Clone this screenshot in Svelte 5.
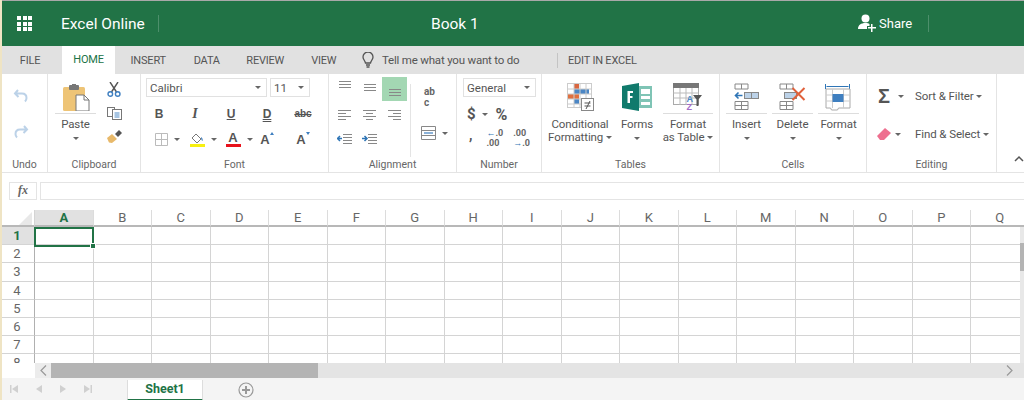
<script>
	const tabs = ['INSERT', 'DATA', 'REVIEW', 'VIEW'];
	const columns = 'ABCDEFGHIJKLMNOPQ'.split('');
	const rows = [1, 2, 3, 4, 5, 6, 7, 8];
</script>

<div class="app">
	<header class="titlebar">
		<div class="waffle">
			{#each Array(9) as _}<i></i>{/each}
		</div>
		<span class="product">Excel Online</span>
		<span class="bar-sep"></span>
		<span class="doc">Book 1</span>
		<svg class="share-icon" width="18" height="18" viewBox="0 0 18 18">
			<circle cx="7.5" cy="4.5" r="4" fill="#fff" />
			<path d="M0 15c0-4 3-6 7.5-6 2 0 3 .4 4 1v2H9v3z" fill="#fff" />
			<path d="M13 10v3h-3v1.5h3V18h1.5v-3.500H18V13h-3.500v-3z" fill="#fff" />
		</svg>
		<span class="share">Share</span>
		<span class="bar-sep share-sep"></span>
	</header>

	<nav class="tabs">
		<span class="tab file">FILE</span>
		<span class="tab home">HOME</span>
		{#each tabs as tab}
			<span class="tab">{tab}</span>
		{/each}
		<svg class="bulb" width="12" height="16" viewBox="0 0 12 16" fill="none" stroke="#555" stroke-width="1.3">
			<path d="M3.500 11C3 8.500 1 7.500 1 5a5 5 0 0 1 10 0c0 2.500-2 3.500-2.500 6z" />
			<path d="M4 13h4M4.500 15h3" />
		</svg>
		<span class="tell">Tell me what you want to do</span>
		<span class="tab-sep"></span>
		<span class="tab edit">EDIT IN EXCEL</span>
	</nav>

	<section class="ribbon">
		<div class="group undo">
			<div class="body undo-body">
				<svg width="16" height="14" viewBox="0 0 16 14" fill="none" stroke="#bcd2e8" stroke-width="2">
					<path d="M5 1 2 4.500 5.500 8M2 4.500h7c3 0 4.500 2 4.500 4.500 0 1.500-.5 2.500-1.500 3.500" />
				</svg>
				<svg width="16" height="14" viewBox="0 0 16 14" fill="none" stroke="#bcd2e8" stroke-width="2">
					<path d="M11 1l3 3.500L10.500 8M14 4.500H7C4 4.500 2.500 6.500 2.500 9c0 1.500.5 2.500 1.500 3.500" />
				</svg>
			</div>
			<div class="label">Undo</div>
		</div>

		<div class="group clipboard">
			<div class="body clip-body">
				<div class="big paste">
					<svg width="28" height="28" viewBox="-1.500 -1 28 28">
						<rect x="0" y="3" width="22" height="24" rx="1.500" fill="#eec476" />
						<rect x="6" y="1" width="10" height="5" rx="1" fill="#777" />
						<rect x="9" y="0" width="4" height="3" fill="#777" />
						<path d="M13 11h8l5 5v11H13z" fill="#fff" stroke="#777" />
						<path d="M21 11v5h5" fill="none" stroke="#777" />
					</svg>
					<span class="big-text">Paste</span>
					<i class="caret"></i>
				</div>
				<div class="small-col">
					<svg width="14" height="15" viewBox="0 0 14 15" fill="none">
						<path d="M3 0l6.500 10M11 0 4.500 10" stroke="#555" stroke-width="1.400" />
						<circle cx="3.300" cy="12" r="2.300" stroke="#3f7fc0" stroke-width="1.400" />
						<circle cx="10.700" cy="12" r="2.300" stroke="#3f7fc0" stroke-width="1.400" />
					</svg>
					<svg width="15" height="13" viewBox="0 0 15 13">
						<rect x=".5" y=".5" width="7" height="9" fill="#fff" stroke="#777" />
						<rect x="5.500" y="2.500" width="9" height="10" fill="#fff" stroke="#777" />
						<path d="M7.500 6h5M7.500 8h5M7.500 10h5" stroke="#4f8ac6" />
					</svg>
					<svg width="15" height="14" viewBox="0 0 15 14">
						<path d="M0 8l5-4 5 5-5 4-3-.5z" fill="#e8b96a" />
						<path d="M8 4l4-4 3 3-4 4z" fill="#555" />
					</svg>
				</div>
			</div>
			<div class="label">Clipboard</div>
		</div>

		<div class="group font">
			<div class="body font-body">
				<div class="selects">
					<div class="select font-name"><span>Calibri</span><i class="caret"></i></div>
					<div class="select font-size"><span>11</span><i class="caret"></i></div>
				</div>
				<div class="font-styles">
					<span class="fbtn bold">B</span>
					<span class="fbtn italic">I</span>
					<span class="fbtn under">U</span>
					<span class="fbtn dbl">D</span>
					<span class="fbtn strike">abc</span>
				</div>
				<div class="font-tools">
					<span class="tool">
						<svg width="13" height="13" viewBox="0 0 13 13" fill="none" stroke="#bbb">
							<path d="M.5.500h12v12H.5zM6.500.500v12M.5 6.500h12" />
						</svg>
						<i class="caret"></i>
					</span>
					<span class="tool">
						<svg width="15" height="15" viewBox="0 0 15 15">
							<path d="M2 6l4-4 5 5-4 4z" fill="#fff" stroke="#777" />
							<path d="M11 5c1.500 1 2 2.500 1.500 4-1-.5-1.500-2-1.500-4z" fill="#3f7fc0" />
							<rect x="0" y="12" width="15" height="3" fill="#f7f011" />
						</svg>
						<i class="caret"></i>
					</span>
					<span class="tool">
						<span class="color-a">A</span>
						<i class="caret"></i>
					</span>
					<span class="grow-a">A<i class="tri up"></i></span>
					<span class="shrink-a">A<i class="tri down"></i></span>
				</div>
			</div>
			<div class="label">Font</div>
		</div>

		<div class="group alignment">
			<div class="body align-body">
				<div class="align-grid">
					<div class="aligns">
						<span class="abtn"><svg width="15" height="16" viewBox="0 0 15 16" stroke="#888"><path d="M2 1.500h12M2 4.500h12M2 7.500h12" /></svg></span>
						<span class="abtn"><svg width="15" height="16" viewBox="0 0 15 16" stroke="#888"><path d="M2 4.500h12M2 7.500h12M2 10.500h12" /></svg></span>
						<span class="abtn on"><svg width="15" height="16" viewBox="0 0 15 16" stroke="#888"><path d="M2 8.500h12M2 11.500h12M2 14.500h12" /></svg></span>
					</div>
					<div class="aligns mid">
						<span class="abtn"><svg width="15" height="11" viewBox="0 0 15 11" stroke="#888"><path d="M1 1.500h13M1 4.500h8M1 7.500h13M1 10.500h8" /></svg></span>
						<span class="abtn"><svg width="15" height="11" viewBox="0 0 15 11" stroke="#888"><path d="M1 1.500h13M4 4.500h7M1 7.500h13M4 10.500h7" /></svg></span>
						<span class="abtn"><svg width="15" height="11" viewBox="0 0 15 11" stroke="#888"><path d="M1 1.500h13M6 4.500h8M1 7.500h13M6 10.500h8" /></svg></span>
					</div>
					<div class="aligns low">
						<span class="abtn">
							<svg width="15" height="11" viewBox="0 0 15 11" fill="none">
								<path d="M6 1.500h9M6 4.500h9M6 7.500h9M6 10.500h9" stroke="#888" />
								<path d="M0 5.500h5M3 3 .5 5.500 3 8" stroke="#2e75b6" stroke-width="1.500" />
							</svg>
						</span>
						<span class="abtn">
							<svg width="15" height="11" viewBox="0 0 15 11" fill="none">
								<path d="M6 1.500h9M6 4.500h9M6 7.500h9M6 10.500h9" stroke="#888" />
								<path d="M0 5.500h5M2.500 3 5 5.500 2.500 8" stroke="#2e75b6" stroke-width="1.500" />
							</svg>
						</span>
					</div>
				</div>
				<div class="align-extra">
					<span class="wrap">ab<br />c</span>
					<span class="merge">
						<svg width="15" height="14" viewBox="0 0 15 14" fill="none">
							<path d="M.5.500h14v13H.5zM.5 4.500h14M.5 9.500h14" stroke="#888" />
							<path d="M3 7h9" stroke="#3f7fc0" stroke-width="1.200" />
						</svg>
						<i class="caret"></i>
					</span>
				</div>
			</div>
			<div class="label">Alignment</div>
		</div>

		<div class="group number">
			<div class="body number-body">
				<div class="select general"><span>General</span><i class="caret"></i></div>
				<div class="num-row dollar">
					<span class="sym">$</span><i class="caret"></i><span class="sym pct">%</span>
				</div>
				<div class="num-row low">
					<span class="comma">,</span>
					<span class="dec"><b class="arrow">←</b>.0<br />.00</span>
					<span class="dec right">.00<br /><b class="arrow">→</b>.0</span>
				</div>
			</div>
			<div class="label">Number</div>
		</div>

		<div class="group tables">
			<div class="body big-row tables-body">
				<div class="big cond">
					<svg width="28" height="28" viewBox="-1 0 28 28">
						<rect x=".5" y=".5" width="24" height="24" fill="#fff" stroke="#ccc" />
						<rect x="7" y="1" width="5" height="5" fill="#d9663f" />
						<rect x="7" y="6" width="15" height="5" fill="#4a86c5" />
						<rect x="1" y="11" width="11" height="5" fill="#e0703f" />
						<rect x="7" y="16" width="5" height="5" fill="#4a86c5" />
						<path d="M.5 6h24M.5 11h24M.5 16h24M.5 21h24M7 1v24M13 1v24M19 1v24" stroke="#ccc" fill="none" />
						<rect x="14.500" y="15.500" width="12" height="12" fill="#fff" stroke="#888" />
						<path d="M17.500 20h6M17.500 23h6M23 18l-4 8" stroke="#555" fill="none" />
					</svg>
					<span class="big-text">Conditional</span>
					<span class="big-text">Formatting <i class="caret"></i></span>
				</div>
				<div class="big forms">
					<svg width="30" height="28" viewBox="0 0 30 28">
						<rect x="12" y="3" width="18" height="22" fill="#7fc4b5" />
						<rect x="19" y="6" width="9" height="5" fill="#fff" />
						<rect x="19" y="13" width="9" height="3" fill="#fff" />
						<rect x="19" y="19" width="9" height="3" fill="#fff" />
						<path d="M0 3l17-3v28L0 25z" fill="#107a6c" />
						<path d="M5.500 8H11v2H8v3h2.500v2H8v5H5.500z" fill="#fff" />
					</svg>
					<span class="big-text">Forms</span>
					<i class="caret"></i>
				</div>
				<div class="big astable">
					<svg width="30" height="28" viewBox="0 0 30 28">
						<rect x=".5" y=".5" width="25" height="21" fill="#fff" stroke="#aaa" />
						<rect x="0" y="0" width="26" height="5" fill="#777" />
						<path d="M.5 10h25M.5 15h25M7 5v17M13 5v17M19 5v17" stroke="#bbb" fill="none" />
						<text x="13.500" y="19" class="az">A</text>
						<text x="13.500" y="27" class="az zed">Z</text>
						<path d="M20 12h9l-3.500 4.500V23h-2v-6.500z" fill="#555" />
					</svg>
					<span class="big-text">Format</span>
					<span class="big-text">as Table <i class="caret"></i></span>
				</div>
			</div>
			<div class="label">Tables</div>
		</div>

		<div class="group cells">
			<div class="body big-row cells-body">
				<div class="big cell-btn">
					<svg width="26" height="28" viewBox="0 0 26 28" fill="none">
						<path d="M1.500 1h13v5h-13zM8 1v5M1.500 18.500h13v8h-13zM8 18.500v8M1.500 22.500h13" stroke="#888" />
						<rect x="11" y="9.500" width="14" height="6" fill="#bcd2e8" stroke="#888" />
						<path d="M18 9.500v6" stroke="#888" />
						<path d="M2 12.500h7M5 9.500l-3 3 3 3" stroke="#2e75b6" stroke-width="1.600" />
					</svg>
					<span class="big-text">Insert</span>
					<i class="caret"></i>
				</div>
				<div class="big cell-btn">
					<svg width="28" height="28" viewBox="0 0 28 28" fill="none">
						<path d="M1.500 1h13v5h-13zM8 1v5M1.500 18.500h13v8h-13zM8 18.500v8M1.500 22.500h13" stroke="#888" />
						<rect x="6" y="9.500" width="12" height="6" fill="#bcd2e8" stroke="#888" />
						<path d="M14 5l12 12M26 5 14 17" stroke="#e0603a" stroke-width="2" />
					</svg>
					<span class="big-text">Delete</span>
					<i class="caret"></i>
				</div>
				<div class="big cell-btn">
					<svg width="28" height="28" viewBox="0 0 28 28" fill="none">
						<path d="M1 1v5M25 1v5M2 3.500h22" stroke="#2e75b6" />
						<path d="M1.500 6h24v19H14l-1 2H7l-1-2H1.500z" stroke="#aaa" fill="#fff" />
						<path d="M1.500 12h24M1.500 18h24M8 6v19M19 6v19" stroke="#ccc" />
						<rect x="8" y="11" width="11" height="8" fill="#3f7fc0" />
					</svg>
					<span class="big-text">Format</span>
					<i class="caret"></i>
				</div>
			</div>
			<div class="label">Cells</div>
		</div>

		<div class="group editing">
			<div class="body edit-body">
				<div class="edit-row">
					<span class="sigma">Σ</span><i class="caret"></i>
					<span class="edit-text sort">Sort &amp; Filter <i class="caret"></i></span>
				</div>
				<div class="edit-row">
					<svg class="eraser" width="14" height="12" viewBox="0 0 14 12">
						<path d="M0 8l8-8 6 5-7 7H3z" fill="#ee6f8f" />
					</svg>
					<i class="caret"></i>
					<span class="edit-text">Find &amp; Select <i class="caret"></i></span>
				</div>
			</div>
			<div class="label">Editing</div>
		</div>

		<svg class="collapse" width="10" height="7" viewBox="0 0 10 7" fill="none" stroke="#555" stroke-width="1.500">
			<path d="M1 6l4-4 4 4" />
		</svg>
	</section>

	<div class="formula">
		<span class="fx">fx</span>
		<div class="formula-input"></div>
	</div>

	<div class="sheet">
		<div class="grid">
			<div class="corner"><i></i></div>
			{#each columns as col, i}
				<div class="col-head" class:active={i === 0}>{col}</div>
			{/each}
			{#each rows as row}
				<div class="row-head" class:active={row === 1}>{row}</div>
				{#each columns as col}
					<div class="cell"></div>
				{/each}
			{/each}
		</div>
		<div class="selection"><i></i></div>
		<div class="vscroll"><i></i></div>
	</div>

	<div class="hscroll">
		<div class="hscroll-gap"></div>
		<span class="chev">
			<svg width="7" height="11" viewBox="0 0 7 11" fill="none" stroke="#999" stroke-width="1.200"><path d="M6 .5 1 5.500l5 5" /></svg>
		</span>
		<div class="thumb"></div>
		<span class="chev end">
			<svg width="7" height="11" viewBox="0 0 7 11" fill="none" stroke="#999" stroke-width="1.200"><path d="M1 .5l5 5-5 5" /></svg>
		</span>
	</div>

	<footer class="sheetbar">
		<div class="sheet-nav">
			<svg width="8" height="8" viewBox="0 0 8 8" fill="#d0d0d0"><path d="M0 0h1.500v8H0zM8 0v8L2 4z" /></svg>
			<svg width="8" height="8" viewBox="0 0 8 8" fill="#d0d0d0"><path d="M7 0v8L1 4z" /></svg>
			<svg width="8" height="8" viewBox="0 0 8 8" fill="#d0d0d0"><path d="M1 0v8l6-4z" /></svg>
			<svg width="8" height="8" viewBox="0 0 8 8" fill="#d0d0d0"><path d="M8 0H6.500v8H8zM0 0v8l6-4z" /></svg>
		</div>
		<div class="sheet-tab">Sheet1</div>
		<svg class="add" width="16" height="16" viewBox="0 0 16 16" fill="none" stroke="#999">
			<circle cx="8" cy="8" r="7" stroke-width="1.200" />
			<path d="M8 4v8M4 8h8" stroke-width="2" />
		</svg>
	</footer>
</div>

<style>
	:global(body) {
		margin: 0;
		background: #fff;
	}
	.app {
		width: 1024px;
		height: 400px;
		box-sizing: border-box;
		border-left: 2px solid #efe4c4;
		overflow: hidden;
		display: flex;
		flex-direction: column;
		font-family: Roboto, 'Open Sans', sans-serif;
		color: #555;
	}

	.caret {
		display: inline-block;
		width: 0;
		height: 0;
		border-left: 3px solid transparent;
		border-right: 3px solid transparent;
		border-top: 3px solid #666;
		vertical-align: middle;
		flex: none;
	}

	/* Title bar */
	.titlebar {
		height: 45px;
		margin-top: 1px;
		box-shadow: 0 -1px 0 #a9a9a9;
		flex: none;
		background: #217346;
		color: #fff;
		display: flex;
		align-items: center;
	}
	.waffle {
		margin-left: 15px;
		width: 15px;
		display: grid;
		grid-template-columns: repeat(3, 4px);
		gap: 1.500px;
	}
	.waffle i {
		height: 4px;
		background: #fff;
	}
	.product {
		margin-left: 29px;
		font-size: 15.500px;
		width: 97px;
		white-space: nowrap;
	}
	.bar-sep {
		width: 1px;
		height: 17px;
		background: #4d8f6b;
	}
	.doc {
		margin-left: 272px;
		font-size: 15.500px;
		width: 427px;
	}
	.share-icon {
		flex: none;
		margin-top: -2px;
	}
	.share {
		margin-left: 3px;
		font-size: 13px;
		width: 49px;
	}

	/* Tabs */
	.tabs {
		height: 28px;
		flex: none;
		background: #e1e1e1;
		display: flex;
		align-items: center;
		font-size: 11px;
		letter-spacing: -0.2px;
		white-space: nowrap;
	}
	.tab {
		flex: none;
		width: 58.500px;
		text-align: center;
	}
	.tab.file {
		width: 60px;
		margin-right: 0;
		box-sizing: border-box;
		padding-right: 4px;
	}
	.tab.home {
		width: 53px;
		height: 28px;
		line-height: 28px;
		background: #fff;
		color: #217346;
		margin-right: 4px;
	}
	.bulb {
		margin-left: 9px;
		flex: none;
	}
	.tell {
		margin-left: 8px;
		width: 175px;
		font-size: 11.500px;
	}
	.tab-sep {
		width: 1px;
		height: 15px;
		background: #c4c4c4;
	}
	.tab.edit {
		width: auto;
		margin-left: 10px;
	}

	/* Ribbon */
	.ribbon {
		height: 99px;
		flex: none;
		box-sizing: border-box;
		border-bottom: 1px solid #e4e4e4;
		display: flex;
		position: relative;
		font-size: 11px;
	}
	.group {
		flex: none;
		display: flex;
		flex-direction: column;
		height: 98px;
		box-sizing: border-box;
		padding-top: 1px;
		border-right: 1px solid #e4e4e4;
	}
	.body {
		flex: 1;
		min-height: 0;
	}
	.label {
		text-align: center;
		font-size: 10.500px;
		line-height: 18px;
		height: 16px;
		color: #666;
		white-space: nowrap;
	}
	.undo {
		width: 46px;
	}
	.undo-body {
		display: flex;
		flex-direction: column;
		align-items: flex-start;
		padding: 14px 0 0 11px;
		gap: 22px;
	}
	.clipboard {
		width: 93px;
	}
	.clip-body {
		display: flex;
		padding: 8px 0 0 7px;
	}
	.big {
		display: flex;
		flex-direction: column;
		align-items: center;
		width: 41px;
		flex: none;
		white-space: nowrap;
	}
	.big > svg {
		height: 28px;
		padding-bottom: 2px;
		border-bottom: 1px solid transparent;
		flex: none;
	}
	.big .big-text {
		line-height: 13px;
		font-size: 11.500px;
		letter-spacing: -0.1px;
	}
	.big > .caret {
		margin-top: 6px;
	}
	.paste > svg,
	.astable > svg,
	.cell-btn > svg {
		width: 100%;
		border-bottom-color: #ddd;
	}
	.paste .big-text,
	.cond .big-text:first-of-type,
	.forms .big-text,
	.astable .big-text:first-of-type,
	.cell-btn .big-text {
		margin-top: 4px;
	}
	.small-col {
		display: flex;
		flex-direction: column;
		align-items: center;
		width: 36px;
		gap: 10px;
		margin-top: -1px;
	}

	/* Font group */
	.font {
		width: 188px;
	}
	.font-body {
		padding-top: 3px;
	}
	.selects {
		display: flex;
		gap: 3px;
		padding-left: 5px;
	}
	.select {
		display: flex;
		align-items: center;
		justify-content: space-between;
		height: 19px;
		box-sizing: border-box;
		border: 1px solid #e1e1e1;
		padding: 0 5px 0 3px;
		font-size: 11.500px;
	}
	.font-name {
		width: 121px;
	}
	.font-size {
		width: 40px;
	}
	.font-styles {
		display: grid;
		grid-template-columns: repeat(5, 36px);
		margin-top: 8px;
		height: 18px;
		line-height: 18px;
		text-align: center;
		font-family: 'Liberation Sans', sans-serif;
		font-size: 12px;
		color: #555;
	}
	.fbtn {
		font-weight: bold;
	}
	.italic {
		font-family: 'Liberation Serif', serif;
		font-style: italic;
		font-size: 14px;
	}
	.under {
		text-decoration: underline;
	}
	.dbl {
		text-decoration: underline double;
	}
	.strike {
		text-decoration: line-through;
		font-size: 10px;
	}
	.font-tools {
		display: grid;
		grid-template-columns: 36px 36px 36px 20px 52px;
		margin: 7px 0 0 8px;
		height: 18px;
		align-items: center;
	}
	.tool {
		display: flex;
		align-items: center;
		justify-content: center;
		gap: 6px;
	}
	.color-a {
		width: 15px;
		text-align: center;
		font-family: 'Liberation Sans', sans-serif;
		font-weight: bold;
		font-size: 13px;
		line-height: 12px;
		border-bottom: 3px solid #e8121c;
	}
	.grow-a,
	.shrink-a {
		text-align: center;
		font-family: 'Liberation Sans', sans-serif;
		font-size: 13px;
		font-weight: bold;
	}
	.tri {
		display: inline-block;
		width: 0;
		height: 0;
		border-left: 2.500px solid transparent;
		border-right: 2.500px solid transparent;
		vertical-align: top;
	}
	.tri.up {
		border-bottom: 3px solid #3f7fc0;
	}
	.tri.down {
		border-top: 3px solid #3f7fc0;
	}

	/* Alignment group */
	.alignment {
		width: 128px;
	}
	.align-body {
		display: flex;
		padding-top: 2px;
	}
	.align-grid {
		width: 82px;
		box-sizing: border-box;
		padding-left: 3px;
		position: relative;
	}
	.align-grid::after {
		content: '';
		position: absolute;
		right: 0;
		top: 7px;
		height: 73px;
		width: 1px;
		background: #e4e4e4;
	}
	.aligns {
		display: grid;
		grid-template-columns: repeat(3, 25px);
		height: 24px;
	}
	.aligns.mid {
		margin-top: 5px;
		height: 18px;
	}
	.aligns.low {
		margin-top: 6px;
		height: 18px;
	}
	.abtn {
		display: flex;
		justify-content: center;
		align-items: flex-start;
		padding-top: 3px;
	}
	.abtn svg {
		flex: none;
	}
	.abtn.on {
		background: #a3d7b3;
		padding-top: 4px;
	}
	.align-extra {
		display: flex;
		flex-direction: column;
		align-items: flex-start;
		padding: 9px 0 0 10px;
	}
	.wrap {
		margin-left: 3px;
		font-size: 10px;
		line-height: 11px;
		font-weight: 700;
		color: #666;
	}
	.merge {
		display: flex;
		align-items: center;
		gap: 6px;
		margin-top: 18px;
	}

	/* Number group */
	.number {
		width: 85px;
	}
	.number-body {
		padding: 3px 0 0 6px;
	}
	.general {
		width: 73px;
	}
	.num-row {
		display: flex;
		align-items: center;
		height: 18px;
		margin-top: 8px;
	}
	.num-row.low {
		margin-top: 6px;
	}
	.sym {
		font-size: 15px;
		font-weight: 700;
		margin-left: 4px;
		margin-right: 6px;
	}
	.sym.pct {
		margin-left: 8px;
		font-size: 16px;
	}
	.comma {
		font-size: 14px;
		font-weight: 700;
		margin: -6px 0 0 6px;
	}
	.dec {
		font-size: 9px;
		line-height: 10px;
		margin-left: 14px;
		font-weight: 700;
		color: #666;
		white-space: nowrap;
	}
	.dec.right {
		margin-left: 10px;
	}
	.arrow {
		color: #2e75b6;
	}

	/* Tables and Cells */
	.tables {
		width: 178px;
	}
	.big-row {
		display: flex;
		padding-top: 8px;
	}
	.tables-body .cond {
		width: 74px;
		margin-left: 1px;
	}
	.tables-body .forms {
		width: 44px;
		margin-left: -2px;
	}
	.tables-body .astable {
		width: 50px;
		margin-left: 4px;
	}
	.az {
		font-family: 'Liberation Sans', sans-serif;
		font-size: 9px;
		font-weight: bold;
		fill: #4a86c5;
	}
	.zed {
		fill: #a36cc8;
	}
	.cells {
		width: 147px;
	}
	.cells-body {
		padding-left: 6px;
		gap: 5px;
	}
	.editing {
		width: 130px;
	}
	.edit-body {
		padding: 11px 0 0 9px;
	}
	.edit-row {
		display: flex;
		align-items: center;
		height: 20px;
		margin-bottom: 18px;
		white-space: nowrap;
	}
	.sigma {
		width: 16px;
		font-family: 'Liberation Sans', sans-serif;
		font-size: 20px;
		font-weight: bold;
		color: #555;
		margin-right: 6px;
		text-align: center;
	}
	.eraser {
		margin-right: 4px;
		margin-left: 1px;
		flex: none;
	}
	.edit-text {
		margin-left: 14px;
		font-size: 11.500px;
		letter-spacing: -0.1px;
	}
	.edit-text.sort {
		margin-left: 11px;
	}
	.collapse {
		position: absolute;
		right: 0;
		bottom: 10px;
	}

	/* Formula bar */
	.formula {
		display: flex;
		height: 18px;
		flex: none;
		margin-top: 9px;
		padding-left: 7px;
		gap: 3px;
	}
	.fx {
		width: 28px;
		box-sizing: border-box;
		border: 1px solid #e4e4e4;
		text-align: center;
		font-family: 'Liberation Serif', serif;
		font-style: italic;
		font-weight: bold;
		font-size: 12px;
		line-height: 15px;
		color: #666;
	}
	.formula-input {
		flex: 1;
		border: 1px solid #e4e4e4;
		border-right: 0;
	}

	/* Grid */
	.sheet {
		position: relative;
		height: 153px;
		flex: none;
		margin-top: 10px;
		overflow: hidden;
	}
	.grid {
		display: grid;
		grid-template-columns: 33px repeat(17, 58.500px);
		grid-template-rows: 17px repeat(8, 18.200px);
		font-size: 13px;
		color: #666;
	}
	.corner {
		border-right: 1px solid #d4d4d4;
		border-bottom: 2px solid #b8b8b8;
		box-sizing: border-box;
	}
	.corner i {
		display: block;
		width: 0;
		height: 0;
		margin: 2px 0 0 17px;
		border-left: 13px solid transparent;
		border-bottom: 13px solid #e8e8e8;
	}
	.col-head {
		box-sizing: border-box;
		border-right: 1px solid #dcdcdc;
		border-bottom: 2px solid #b8b8b8;
		text-align: center;
		line-height: 15px;
	}
	.row-head {
		box-sizing: border-box;
		border-right: 1px solid #b0b0b0;
		border-bottom: 1px solid #d4d4d4;
		text-align: center;
		padding-right: 2px;
		line-height: 18px;
	}
	.active {
		background: #e1e1e1;
		color: #217346;
		font-weight: bold;
	}
	.cell {
		box-sizing: border-box;
		border-right: 1px solid #d4d4d4;
		border-bottom: 1px solid #d4d4d4;
	}
	.selection {
		position: absolute;
		left: 32px;
		top: 17px;
		width: 60px;
		height: 20px;
		box-sizing: border-box;
		border: 2px solid #217346;
	}
	.selection i {
		position: absolute;
		right: -4px;
		bottom: -4px;
		width: 4px;
		height: 4px;
		background: #217346;
		border: 1px solid #fff;
	}
	.vscroll {
		position: absolute;
		right: 0;
		top: 17px;
		bottom: 0;
		width: 4px;
		background: #e8e8e8;
	}
	.vscroll i {
		display: block;
		height: 28px;
		margin-top: 16px;
		background: #b4b4b4;
	}

	/* Scrollbar and sheet tabs */
	.hscroll {
		height: 15px;
		flex: none;
		display: flex;
		background: #e4e4e4;
	}
	.hscroll-gap {
		width: 33px;
		background: #fff;
	}
	.chev {
		width: 16px;
		display: flex;
		align-items: center;
		justify-content: center;
		background: #ececec;
	}
	.chev.end {
		margin-left: auto;
		width: 22px;
		background: none;
		box-sizing: border-box;
		padding-right: 8px;
	}
	.thumb {
		width: 267px;
		background: #b4b4b4;
	}
	.sheetbar {
		flex: 1;
		background: #f4f4f4;
		display: flex;
		align-items: flex-start;
	}
	.sheet-nav {
		display: flex;
		gap: 16.500px;
		width: 125px;
		box-sizing: border-box;
		padding: 7px 0 0 8px;
	}
	.sheet-tab {
		width: 76px;
		height: 21px;
		margin-top: 2px;
		box-sizing: border-box;
		background: #fff;
		border: 1px solid #ddd;
		border-top: 0;
		border-bottom: 2px solid #217346;
		text-align: center;
		color: #217346;
		font-weight: bold;
		font-size: 12.500px;
		line-height: 18px;
	}
	.add {
		margin: 4px 0 0 35px;
	}
</style>
